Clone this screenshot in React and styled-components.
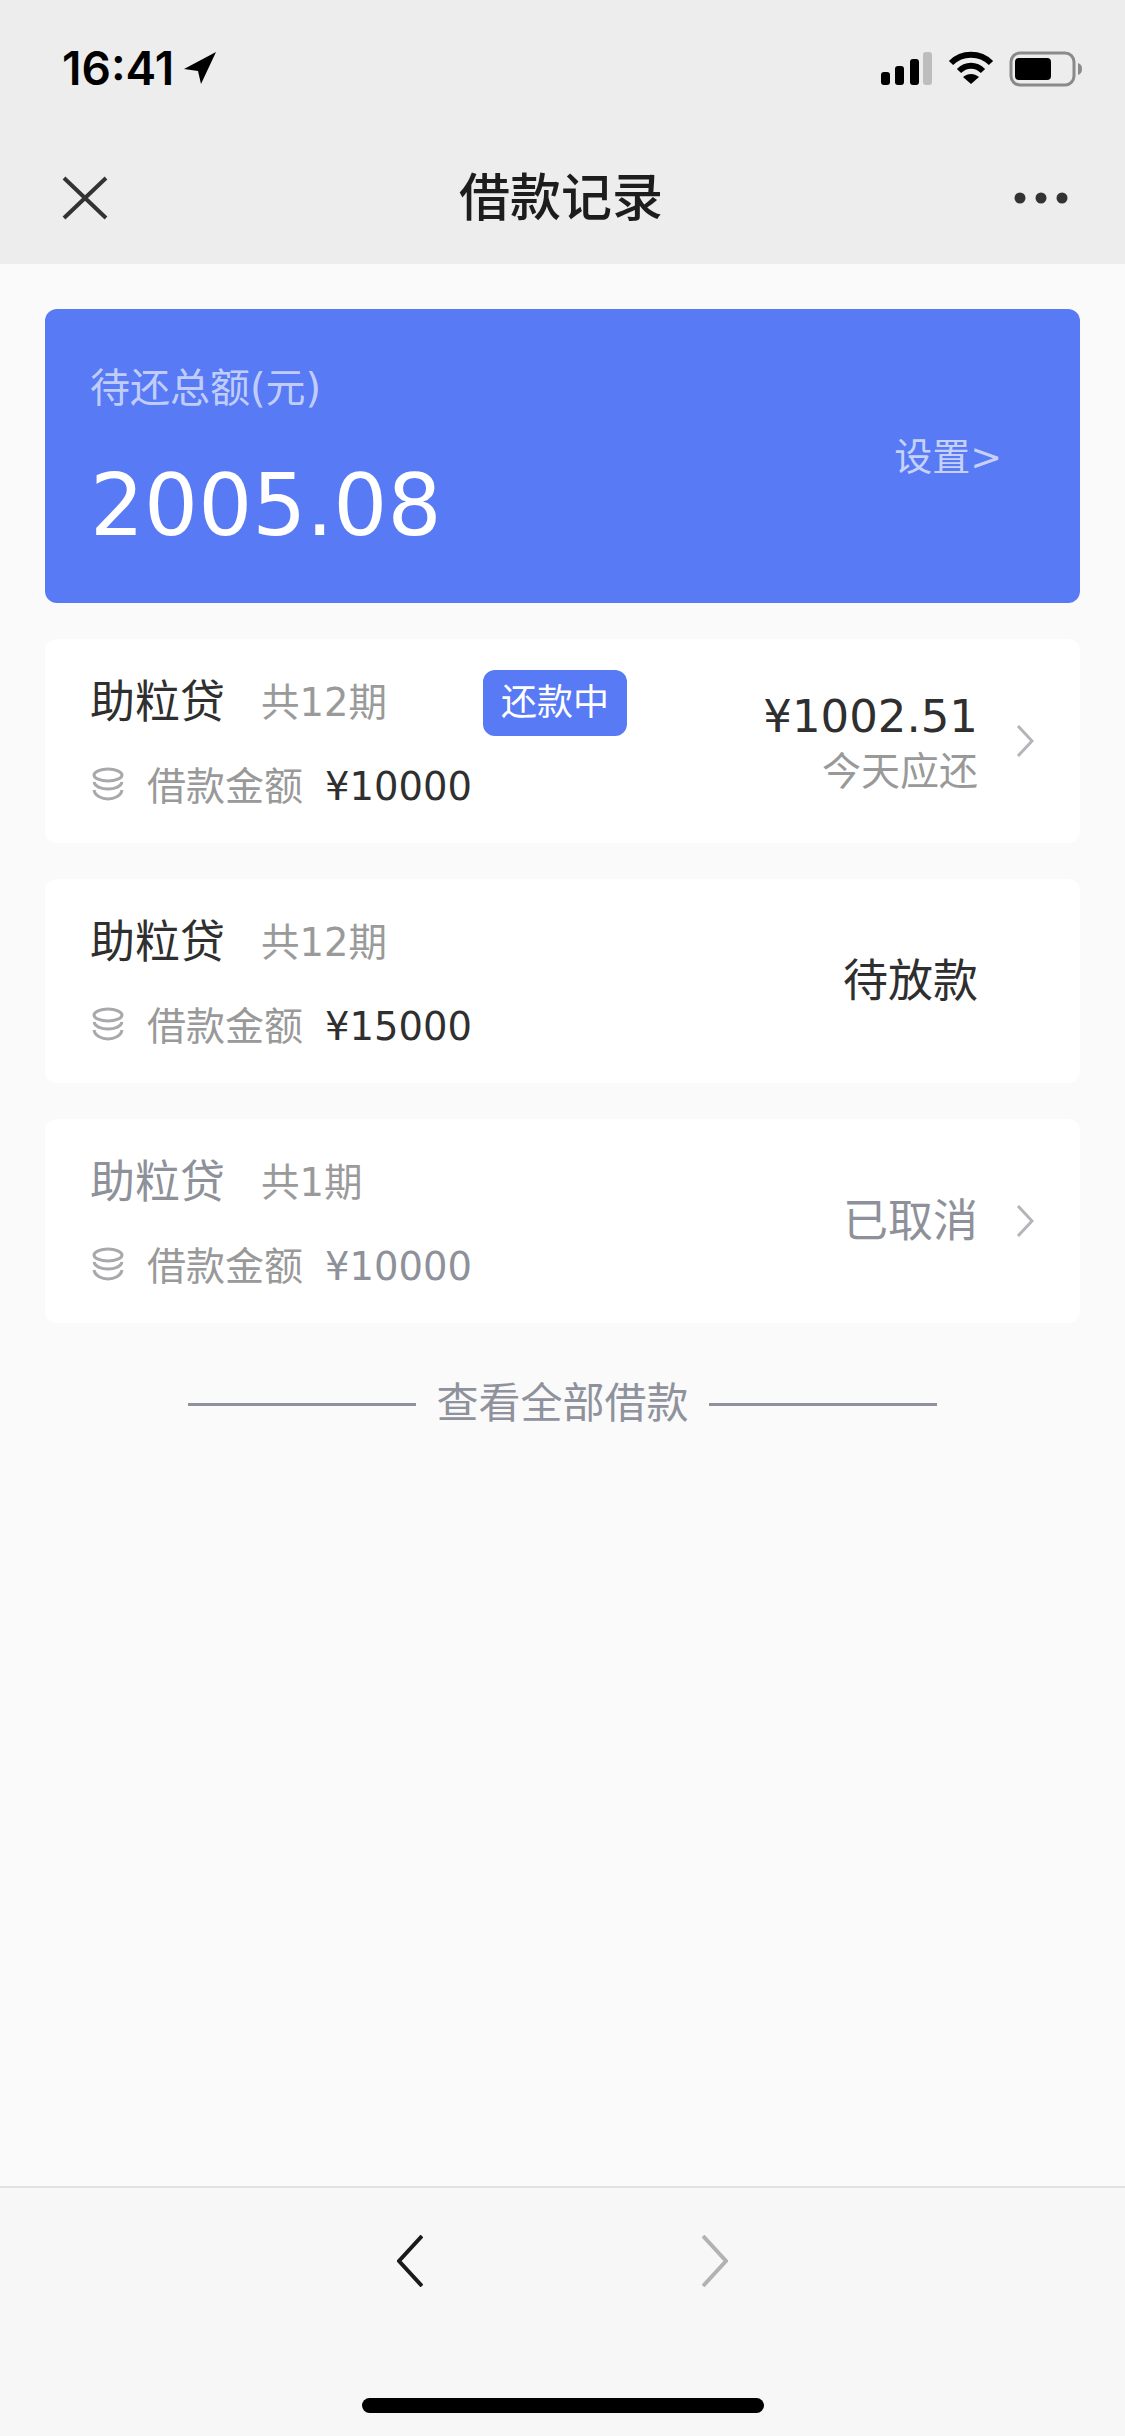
import React from "react";
import styled, { createGlobalStyle } from "styled-components";

const GlobalStyle = createGlobalStyle`
  * { box-sizing: border-box; }
  body {
    margin: 0;
    background: #fafafa;
    font-family: "DejaVu Sans", "Noto Sans CJK SC", sans-serif;
  }
`;

const Page = styled.div`
  width: 1125px;
  height: 2436px;
  display: flex;
  flex-direction: column;
  overflow: hidden;
`;

const Header = styled.header`
  height: 264px;
  background: #ededed;
  flex: none;
`;

const StatusBar = styled.div`
  height: 132px;
  padding: 45px 42px 0 62px;
  display: flex;
  justify-content: space-between;
  align-items: flex-start;
`;

const Time = styled.div`
  display: flex;
  align-items: center;
  gap: 10px;
  height: 46px;
  font-family: Inter, sans-serif;
  font-size: 46px;
  font-weight: 600;
  letter-spacing: 0;
  color: #000;
`;

const StatusIcons = styled.div`
  display: flex;
  align-items: flex-start;
  margin-top: 6px;
  gap: 15px;
`;

const NavBar = styled.div`
  height: 132px;
  padding: 0 57px 0 62px;
  display: flex;
  justify-content: space-between;
  align-items: center;
`;

const NavTitle = styled.h1`
  margin: -8px 0 0;
  font-family: "Noto Sans CJK SC", sans-serif;
  font-size: 51px;
  line-height: 60px;
  font-weight: 500;
  color: #1d1d1d;
`;

const Main = styled.main`
  flex: 1;
  padding: 45px 45px 0;
  display: flex;
  flex-direction: column;
  background: #fafafa;
`;

const Summary = styled.section`
  height: 294px;
  border-radius: 12px;
  background: #587af5;
  padding: 52px 78px 0 45px;
  display: flex;
  justify-content: space-between;
  align-items: flex-start;
`;

const SummaryLabel = styled.div`
  font-size: 40px;
  line-height: 54px;
  color: rgba(255, 255, 255, 0.65);
`;

const SummaryAmount = styled.div`
  margin-top: 39px;
  font-size: 85px;
  line-height: 104px;
  color: #fff;
`;

const SettingsLink = styled.div`
  margin-top: 73px;
  font-size: 38px;
  line-height: 46px;
  color: rgba(255, 255, 255, 0.68);
`;

const LoanList = styled.div`
  margin-top: 36px;
  display: flex;
  flex-direction: column;
  gap: 36px;
`;

const LoanCard = styled.article`
  height: 204px;
  border-radius: 12px;
  background: #fff;
  padding: 0 46px 0 45px;
  display: flex;
  align-items: center;
  justify-content: space-between;
`;

const LoanInfo = styled.div`
  display: flex;
  flex-direction: column;
  gap: 31px;
`;

const TitleRow = styled.div`
  display: flex;
  align-items: center;
  height: 60px;
`;

const LoanName = styled.span`
  font-size: 45px;
  line-height: 60px;
  color: ${props => (props.$muted ? "#8e9199" : "#2f2f2f")};
`;

const LoanTerm = styled.span`
  margin-left: 36px;
  font-size: 38.5px;
  line-height: 60px;
  color: #9a9a9a;
`;

const StatusTag = styled.span`
  margin-left: 96px;
  width: 144px;
  height: 66px;
  border-radius: 12px;
  background: #587af5;
  color: #fff;
  font-size: 36px;
  line-height: 66px;
  text-align: center;
`;

const AmountRow = styled.div`
  display: flex;
  align-items: center;
  height: 46px;
  padding-left: 2px;
`;

const CoinIcon = styled.svg`
  margin-top: -5px;
  flex: none;
`;

const AmountLabel = styled.span`
  margin-left: 23px;
  font-size: 39px;
  line-height: 46px;
  color: #999;
`;

const AmountValue = styled.span`
  margin-left: 22px;
  font-size: 38.5px;
  line-height: 46px;
  color: ${props => (props.$muted ? "#8e9199" : "#2f2f2f")};
`;

const LoanSide = styled.div`
  display: flex;
  align-items: center;
`;

const SideText = styled.div`
  margin-top: 3px;
  display: flex;
  flex-direction: column;
  align-items: flex-end;
  gap: 3px;
`;

const DueAmount = styled.div`
  font-size: 45px;
  line-height: 56px;
  color: #2f2f2f;
`;

const DueNote = styled.div`
  font-size: 39px;
  line-height: 48px;
  color: #999;
`;

const LoanState = styled.div`
  margin-top: 2px;
  font-size: 45px;
  line-height: 60px;
  color: ${props => (props.$muted ? "#8e9199" : "#2f2f2f")};
  margin-right: ${props => (props.$noArrow ? "56px" : "0")};
`;

const ChevronBox = styled.svg`
  margin-left: 38px;
  flex: none;
`;

const ViewAll = styled.div`
  margin-top: 53px;
  display: flex;
  align-items: center;
  justify-content: center;
  gap: 20px;
  font-size: 42px;
  line-height: 56px;
  color: #8f929c;
`;

const Rule = styled.span`
  width: 228px;
  height: 3px;
  background: #8f929e;
`;

const BottomBar = styled.footer`
  height: 250px;
  flex: none;
  background: #f7f7f7;
  border-top: 2px solid #e2e2e2;
  display: flex;
  flex-direction: column;
  align-items: center;
`;

const BottomArrows = styled.div`
  margin-top: 47px;
  display: flex;
  gap: 279px;
`;

const HomeBar = styled.div`
  margin-top: 111px;
  width: 402px;
  height: 15px;
  border-radius: 8px;
  background: #000;
`;

function Chevron() {
  return (
    <ChevronBox width="18" height="32" viewBox="0 0 18 32" fill="none">
      <path d="M2 1 L16 16 L2 31" stroke="#b3b5ba" strokeWidth="3" />
    </ChevronBox>
  );
}

function Coins() {
  return (
    <CoinIcon width="32" height="34" viewBox="0 0 32 34" fill="none" stroke="#a9a9ac" strokeWidth="3">
      <ellipse cx="16" cy="8" rx="14" ry="6" />
      <path d="M2 15 C3 20 10 22 16 22 C22 22 29 20 30 15" />
      <path d="M2 23 C3 29 10 32 16 32 C22 32 29 29 30 23" />
    </CoinIcon>
  );
}

function Loan({ term, amount, muted, tag, side }) {
  return (
    <LoanCard>
      <LoanInfo>
        <TitleRow>
          <LoanName $muted={muted}>助粒贷</LoanName>
          <LoanTerm>{term}</LoanTerm>
          {tag && <StatusTag>{tag}</StatusTag>}
        </TitleRow>
        <AmountRow>
          <Coins />
          <AmountLabel>借款金额</AmountLabel>
          <AmountValue $muted={muted}>{amount}</AmountValue>
        </AmountRow>
      </LoanInfo>
      <LoanSide>{side}</LoanSide>
    </LoanCard>
  );
}

export default function App() {
  return (
    <Page>
      <GlobalStyle />
      <Header>
        <StatusBar>
          <Time>
            16:41
            <svg width="32" height="32" viewBox="0 0 32 32">
              <path d="M32 0 L0 17 L14 19 L17 32 Z" fill="#000" />
            </svg>
          </Time>
          <StatusIcons>
            <svg width="52" height="34" viewBox="0 0 52 34">
              <rect x="0" y="21" width="9" height="13" rx="3" fill="#000" />
              <rect x="14" y="15" width="9" height="19" rx="3" fill="#000" />
              <rect x="29" y="8" width="9" height="26" rx="3" fill="#000" />
              <rect x="42" y="1" width="9" height="33" rx="3" fill="#bdbdbd" />
            </svg>
            <svg width="46" height="34" viewBox="0 0 46 34" fill="none" stroke="#000">
              <path d="M3 12 C14 1 32 1 43 12" strokeWidth="6" />
              <path d="M11 20 C18 13 28 13 35 20" strokeWidth="6" />
              <path d="M23 33 L15 26 C20 22 26 22 31 26 Z" fill="#000" stroke="none" />
            </svg>
            <svg width="74" height="36" viewBox="0 0 74 36">
              <rect x="2" y="2" width="63" height="32" rx="9" fill="none" stroke="#8a8a8a" strokeWidth="3" />
              <rect x="6" y="7" width="36" height="22" rx="4" fill="#000" />
              <path d="M69 12 C72 13 73 15 73 18 C73 21 72 23 69 24 Z" fill="#8a8a8a" />
            </svg>
          </StatusIcons>
        </StatusBar>
        <NavBar>
          <svg width="46" height="44" viewBox="0 0 46 44" stroke="#333" strokeWidth="4">
            <path d="M2 2 L44 42 M44 2 L2 42" />
          </svg>
          <NavTitle>借款记录</NavTitle>
          <svg width="54" height="12" viewBox="0 0 54 12" fill="#333">
            <circle cx="6" cy="6" r="5.5" />
            <circle cx="27" cy="6" r="5.5" />
            <circle cx="48" cy="6" r="5.5" />
          </svg>
        </NavBar>
      </Header>
      <Main>
        <Summary>
          <div>
            <SummaryLabel>待还总额(元)</SummaryLabel>
            <SummaryAmount>2005.08</SummaryAmount>
          </div>
          <SettingsLink>设置&gt;</SettingsLink>
        </Summary>
        <LoanList>
          <Loan
            term="共12期"
            amount="¥10000"
            tag="还款中"
            side={
              <>
                <SideText>
                  <DueAmount>¥1002.51</DueAmount>
                  <DueNote>今天应还</DueNote>
                </SideText>
                <Chevron />
              </>
            }
          />
          <Loan term="共12期" amount="¥15000" side={<LoanState $noArrow>待放款</LoanState>} />
          <Loan
            muted
            term="共1期"
            amount="¥10000"
            side={
              <>
                <LoanState $muted>已取消</LoanState>
                <Chevron />
              </>
            }
          />
        </LoanList>
        <ViewAll>
          <Rule />
          查看全部借款
          <Rule />
        </ViewAll>
      </Main>
      <BottomBar>
        <BottomArrows>
          <svg width="26" height="52" viewBox="0 0 26 52" fill="none" stroke="#1a1a1a" strokeWidth="4">
            <path d="M25 1 L2 26 L25 51" />
          </svg>
          <svg width="26" height="52" viewBox="0 0 26 52" fill="none" stroke="#b2b2b2" strokeWidth="4">
            <path d="M1 1 L24 26 L1 51" />
          </svg>
        </BottomArrows>
        <HomeBar />
      </BottomBar>
    </Page>
  );
}
